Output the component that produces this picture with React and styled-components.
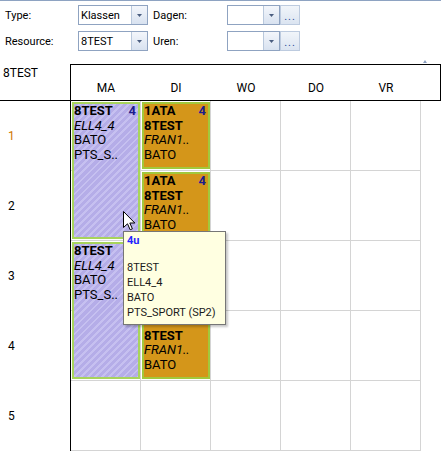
import React from "react";
import styled, { createGlobalStyle } from "styled-components";

const Global = createGlobalStyle`
  html, body { margin: 0; padding: 0; background: #fff; }
  body { width: 441px; height: 451px; overflow: hidden; font-family: Roboto, "Liberation Sans", sans-serif; }
`;

const Page = styled.div`
  position: relative;
  width: 441px;
  height: 451px;
  box-sizing: border-box;
  border-top: 1px solid #8ea3c2;
  overflow: hidden;
`;

/* ---------- toolbar ---------- */
const Toolbar = styled.div`
  display: grid;
  grid-template-columns: 73px 70px 79px 53px 20px;
  grid-auto-rows: 20px;
  row-gap: 6px;
  padding: 4px 0 0 5px;
`;

const FieldLabel = styled.div`
  display: flex;
  align-items: center;
  padding-left: ${(p) => (p.$indent ? 5 : 0)}px;
  font-size: 11px;
  color: #000;
`;

const Combo = styled.div`
  display: flex;
  box-sizing: border-box;
  height: 20px;
  border: 1px solid #8fa3c1;
  background: #fff;
`;

const ComboText = styled.div`
  flex: 1;
  display: flex;
  align-items: center;
  padding-left: 2px;
  font-size: 11px;
  color: #000;
`;

const DropButton = styled.div`
  width: 15px;
  display: flex;
  align-items: center;
  justify-content: center;
  border-left: 1px solid #b9c8dc;
  background: linear-gradient(#f3f6fb, #d8e2f0);
`;

const EllipsisButton = styled.div`
  box-sizing: border-box;
  height: 20px;
  display: flex;
  align-items: flex-end;
  justify-content: center;
  padding-bottom: 3px;
  border: 1px solid #bdcbdf;
  background: linear-gradient(#f1f5fa, #dbe4f1);
  font-size: 11px;
  line-height: 8px;
  letter-spacing: 1px;
  color: #2a4a9a;
`;

const Arrow = () => (
  <svg width="5" height="3" viewBox="0 0 5 3">
    <path d="M0 0H5L2.5 3Z" fill="#4a5d80" />
  </svg>
);

const ComboBox = ({ value }) => (
  <Combo>
    <ComboText>{value}</ComboText>
    <DropButton>
      <Arrow />
    </DropButton>
  </Combo>
);

/* ---------- schedule header ---------- */
const SchedHeader = styled.div`
  position: relative;
  display: flex;
  margin-top: 13px;
`;

const Corner = styled.div`
  width: 70px;
  padding: 2px 0 0 3px;
  box-sizing: border-box;
  font-size: 12px;
  line-height: 14px;
  color: #000;
`;

const DayBox = styled.div`
  display: flex;
  box-sizing: border-box;
  width: 371px;
  height: 36px;
  border: 1px solid #000;
  border-bottom: none;
`;

const DayLabel = styled.div`
  width: 70px;
  padding-top: 16px;
  text-align: center;
  font-size: 12px;
  line-height: 14px;
  color: #000;
`;

const SortMark = styled.div`
  position: absolute;
  left: 423px;
  top: -4px;
  width: 0;
  height: 0;
  border-left: 2.5px solid transparent;
  border-right: 2.5px solid transparent;
  border-bottom: 3px solid #8a9fc0;
`;

/* ---------- schedule body ---------- */
const Body = styled.div`
  display: flex;
  border-top: 1px solid #000;
`;

const RowLabels = styled.div`
  width: 71px;
  box-sizing: border-box;
  border-right: 1px solid #000;
  display: grid;
  grid-template-rows: repeat(5, 70px);
`;

const RowLabel = styled.div`
  display: flex;
  align-items: center;
  padding-left: 8px;
  font-size: 12px;
  color: ${(p) => (p.$current ? "#d07800" : "#000")};
`;

const DayGrid = styled.div`
  display: grid;
  grid-template-columns: repeat(5, 70px);
  grid-template-rows: repeat(5, 70px);
`;

const Cell = styled.div`
  grid-column: ${(p) => p.$col};
  grid-row: ${(p) => p.$row};
  box-sizing: border-box;
  border-right: 1px solid #d4d4d4;
  border-bottom: 1px solid #d4d4d4;
`;

const Lesson = styled.div`
  grid-column: ${(p) => p.$col};
  grid-row: ${(p) => p.$row} / span ${(p) => p.$span};
  margin: 1px 1px 2px 1px;
  box-sizing: border-box;
  overflow: hidden;
  border: 2px solid ${(p) => (p.$kind === "lav" ? "#a8d45c" : "#a2c83c")};
  background: ${(p) =>
    p.$kind === "lav"
      ? "repeating-linear-gradient(135deg, #b5ade8 0px, #b5ade8 3px, #c6c0f0 3px, #c6c0f0 5px)"
      : "#d4961a"};
  font-size: 13px;
  line-height: 14.5px;
  color: #000;
  padding-right: 2px;
`;

const LessonTop = styled.div`
  display: flex;
  justify-content: space-between;
  font-weight: bold;
`;

const Count = styled.span`
  color: #1c1c8c;
  font-weight: bold;
`;

const Line = styled.div`
  white-space: nowrap;
  font-weight: ${(p) => (p.$bold ? "bold" : "normal")};
  font-style: ${(p) => (p.$italic ? "italic" : "normal")};
`;

/* ---------- overlays ---------- */
const Tooltip = styled.div`
  position: absolute;
  left: 123px;
  top: 230px;
  width: 103px;
  box-sizing: border-box;
  padding: 1px 3px 4px 3px;
  border: 1px solid #767676;
  background: #ffffe1;
  box-shadow: 2px 2px 2px rgba(0, 0, 0, 0.22);
  font-size: 11px;
  line-height: 15px;
  color: #1a1a1a;
`;

const TipTitle = styled.div`
  margin-bottom: 12px;
  font-weight: bold;
  color: #2424ff;
`;

const Cursor = styled.svg`
  position: absolute;
  left: 123px;
  top: 210px;
`;

const days = ["MA", "DI", "WO", "DO", "VR"];

const lessons = [
  { col: 1, row: 1, span: 2, kind: "lav", top: "8TEST", lines: [["ELL4_4", "i"], ["BATO"], ["PTS_S.."]] },
  { col: 1, row: 3, span: 2, kind: "lav", top: "8TEST", lines: [["ELL4_4", "i"], ["BATO"], ["PTS_S.."]] },
  ...[1, 2, 3, 4].map((r) => ({
    col: 2,
    row: r,
    span: 1,
    kind: "org",
    top: "1ATA",
    lines: [["8TEST", "b"], ["FRAN1..", "i"], ["BATO"]],
  })),
];

export default function App() {
  const cells = [];
  for (let r = 1; r <= 5; r++)
    for (let c = 1; c <= 5; c++) cells.push(<Cell key={`${r}-${c}`} $col={c} $row={r} />);

  return (
    <>
      <Global />
      <Page>
        <Toolbar>
          <FieldLabel>Type:</FieldLabel>
          <ComboBox value="Klassen" />
          <FieldLabel $indent>Dagen:</FieldLabel>
          <ComboBox value="" />
          <EllipsisButton>...</EllipsisButton>

          <FieldLabel>Resource:</FieldLabel>
          <ComboBox value="8TEST" />
          <FieldLabel $indent>Uren:</FieldLabel>
          <ComboBox value="" />
          <EllipsisButton>...</EllipsisButton>
        </Toolbar>

        <SchedHeader>
          <Corner>8TEST</Corner>
          <DayBox>
            {days.map((d) => (
              <DayLabel key={d}>{d}</DayLabel>
            ))}
          </DayBox>
          <SortMark />
        </SchedHeader>

        <Body>
          <RowLabels>
            {[1, 2, 3, 4, 5].map((n) => (
              <RowLabel key={n} $current={n === 1}>
                {n}
              </RowLabel>
            ))}
          </RowLabels>
          <DayGrid>
            {cells}
            {lessons.map((l, i) => (
              <Lesson key={i} $col={l.col} $row={l.row} $span={l.span} $kind={l.kind}>
                <LessonTop>
                  <span>{l.top}</span>
                  <Count>4</Count>
                </LessonTop>
                {l.lines.map(([t, s]) => (
                  <Line key={t} $bold={s === "b"} $italic={s === "i"}>
                    {t}
                  </Line>
                ))}
              </Lesson>
            ))}
          </DayGrid>
        </Body>

        <Cursor width="13" height="20" viewBox="0 0 13 20">
          <path
            d="M0.5 0.5V16.5L4.5 12.8L7.2 18.8L9.4 17.8L6.8 12H11.8Z"
            fill="#fff"
            stroke="#000"
            strokeWidth="1"
            strokeLinejoin="miter"
          />
        </Cursor>

        <Tooltip>
          <TipTitle>4u</TipTitle>
          <div>8TEST</div>
          <div>ELL4_4</div>
          <div>BATO</div>
          <div>PTS_SPORT (SP2)</div>
        </Tooltip>
      </Page>
    </>
  );
}
